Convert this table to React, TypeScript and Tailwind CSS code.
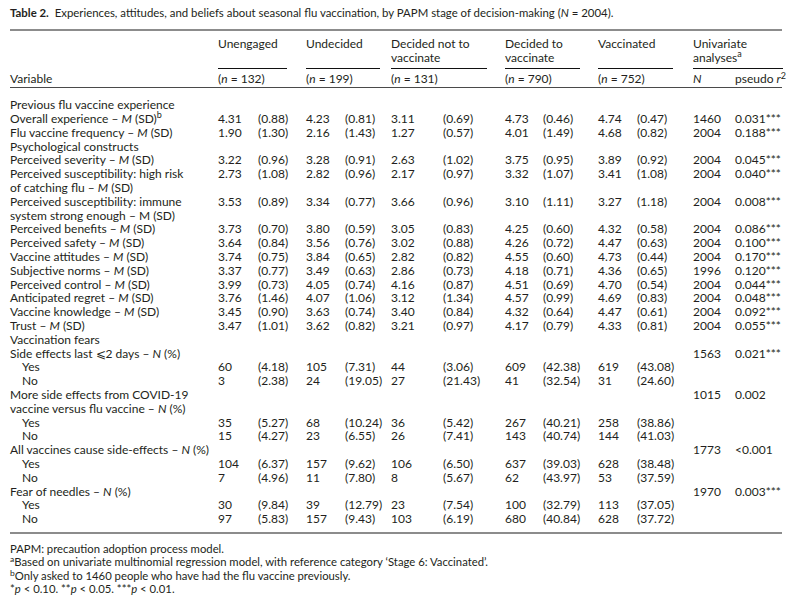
import type { ReactNode } from 'react'

const cols =
  'grid grid-cols-[208px_40px_48px_39px_46px_52px_62px_38px_55px_39px_56px_42px_48px]'

const mSD = (
  <>
    {' '}– <i>M</i> (SD)
  </>
)
const nPct = (
  <>
    {' '}– <i>N</i> (%)
  </>
)

interface Row {
  label: ReactNode[]
  indent?: boolean
  vals?: string[]
  n?: string
  r?: string
}

const rows: Row[] = [
  { label: ['Previous flu vaccine experience'] },
  {
    label: [
      <>
        Overall experience{mSD}
        <sup>b</sup>
      </>,
    ],
    vals: ['4.31', '(0.88)', '4.23', '(0.81)', '3.11', '(0.69)', '4.73', '(0.46)', '4.74', '(0.47)'],
    n: '1460',
    r: '0.031***',
  },
  {
    label: [<>Flu vaccine frequency{mSD}</>],
    vals: ['1.90', '(1.30)', '2.16', '(1.43)', '1.27', '(0.57)', '4.01', '(1.49)', '4.68', '(0.82)'],
    n: '2004',
    r: '0.188***',
  },
  { label: ['Psychological constructs'] },
  {
    label: [<>Perceived severity{mSD}</>],
    vals: ['3.22', '(0.96)', '3.28', '(0.91)', '2.63', '(1.02)', '3.75', '(0.95)', '3.89', '(0.92)'],
    n: '2004',
    r: '0.045***',
  },
  {
    label: ['Perceived susceptibility: high risk', <>of catching flu{mSD}</>],
    vals: ['2.73', '(1.08)', '2.82', '(0.96)', '2.17', '(0.97)', '3.32', '(1.07)', '3.41', '(1.08)'],
    n: '2004',
    r: '0.040***',
  },
  {
    label: ['Perceived susceptibility: immune', 'system strong enough – M (SD)'],
    vals: ['3.53', '(0.89)', '3.34', '(0.77)', '3.66', '(0.96)', '3.10', '(1.11)', '3.27', '(1.18)'],
    n: '2004',
    r: '0.008***',
  },
  {
    label: [<>Perceived benefits{mSD}</>],
    vals: ['3.73', '(0.70)', '3.80', '(0.59)', '3.05', '(0.83)', '4.25', '(0.60)', '4.32', '(0.58)'],
    n: '2004',
    r: '0.086***',
  },
  {
    label: [<>Perceived safety{mSD}</>],
    vals: ['3.64', '(0.84)', '3.56', '(0.76)', '3.02', '(0.88)', '4.26', '(0.72)', '4.47', '(0.63)'],
    n: '2004',
    r: '0.100***',
  },
  {
    label: [<>Vaccine attitudes{mSD}</>],
    vals: ['3.74', '(0.75)', '3.84', '(0.65)', '2.82', '(0.82)', '4.55', '(0.60)', '4.73', '(0.44)'],
    n: '2004',
    r: '0.170***',
  },
  {
    label: [<>Subjective norms{mSD}</>],
    vals: ['3.37', '(0.77)', '3.49', '(0.63)', '2.86', '(0.73)', '4.18', '(0.71)', '4.36', '(0.65)'],
    n: '1996',
    r: '0.120***',
  },
  {
    label: [<>Perceived control{mSD}</>],
    vals: ['3.99', '(0.73)', '4.05', '(0.74)', '4.16', '(0.87)', '4.51', '(0.69)', '4.70', '(0.54)'],
    n: '2004',
    r: '0.044***',
  },
  {
    label: [<>Anticipated regret{mSD}</>],
    vals: ['3.76', '(1.46)', '4.07', '(1.06)', '3.12', '(1.34)', '4.57', '(0.99)', '4.69', '(0.83)'],
    n: '2004',
    r: '0.048***',
  },
  {
    label: [<>Vaccine knowledge{mSD}</>],
    vals: ['3.45', '(0.90)', '3.63', '(0.74)', '3.40', '(0.84)', '4.32', '(0.64)', '4.47', '(0.61)'],
    n: '2004',
    r: '0.092***',
  },
  {
    label: [<>Trust{mSD}</>],
    vals: ['3.47', '(1.01)', '3.62', '(0.82)', '3.21', '(0.97)', '4.17', '(0.79)', '4.33', '(0.81)'],
    n: '2004',
    r: '0.055***',
  },
  { label: ['Vaccination fears'] },
  { label: [<>Side effects last ⩽2 days{nPct}</>], n: '1563', r: '0.021***' },
  {
    label: ['Yes'],
    indent: true,
    vals: ['60', '(4.18)', '105', '(7.31)', '44', '(3.06)', '609', '(42.38)', '619', '(43.08)'],
  },
  {
    label: ['No'],
    indent: true,
    vals: ['3', '(2.38)', '24', '(19.05)', '27', '(21.43)', '41', '(32.54)', '31', '(24.60)'],
  },
  {
    label: ['More side effects from COVID-19', <>vaccine versus flu vaccine{nPct}</>],
    n: '1015',
    r: '0.002',
  },
  {
    label: ['Yes'],
    indent: true,
    vals: ['35', '(5.27)', '68', '(10.24)', '36', '(5.42)', '267', '(40.21)', '258', '(38.86)'],
  },
  {
    label: ['No'],
    indent: true,
    vals: ['15', '(4.27)', '23', '(6.55)', '26', '(7.41)', '143', '(40.74)', '144', '(41.03)'],
  },
  { label: [<>All vaccines cause side-effects{nPct}</>], n: '1773', r: '<0.001' },
  {
    label: ['Yes'],
    indent: true,
    vals: ['104', '(6.37)', '157', '(9.62)', '106', '(6.50)', '637', '(39.03)', '628', '(38.48)'],
  },
  {
    label: ['No'],
    indent: true,
    vals: ['7', '(4.96)', '11', '(7.80)', '8', '(5.67)', '62', '(43.97)', '53', '(37.59)'],
  },
  { label: [<>Fear of needles{nPct}</>], n: '1970', r: '0.003***' },
  {
    label: ['Yes'],
    indent: true,
    vals: ['30', '(9.84)', '39', '(12.79)', '23', '(7.54)', '100', '(32.79)', '113', '(37.05)'],
  },
  {
    label: ['No'],
    indent: true,
    vals: ['97', '(5.83)', '157', '(9.43)', '103', '(6.19)', '680', '(40.84)', '628', '(37.72)'],
  },
]

const groups = [
  { name: ['Unengaged'], n: '132', rule: 'w-[69px]' },
  { name: ['Undecided'], n: '199', rule: 'w-[74px]' },
  { name: ['Decided not to', 'vaccinate'], n: '131', rule: 'w-[96px]' },
  { name: ['Decided to', 'vaccinate'], n: '790', rule: 'w-[75px]' },
  { name: ['Vaccinated'], n: '752', rule: 'w-[75px]' },
]

function TableRow({ row }: { row: Row }) {
  return (
    <div className={cols}>
      <div className={row.indent ? 'pl-[12px]' : ''}>
        {row.label.map((line, i) => (
          <div key={i} className="whitespace-nowrap">
            {line}
          </div>
        ))}
      </div>
      {row.vals
        ? row.vals.map((v, i) => <div key={i}>{v}</div>)
        : Array.from({ length: 10 }).map((_, i) => <div key={i} />)}
      <div>{row.n}</div>
      <div className="whitespace-nowrap">{row.r}</div>
    </div>
  )
}

export default function App() {
  return (
    <div className="w-[792px] h-[604px] bg-white px-[10px] pt-[6px] font-['Lato',sans-serif] text-[12px] leading-[13.8px] text-[#231f20]">
      <p className="whitespace-nowrap text-[11.4px]">
        <b>Table 2.</b>&nbsp;&nbsp;Experiences, attitudes, and beliefs about seasonal flu
        vaccination, by PAPM stage of decision-making (<i>N</i> = 2004).
      </p>

      <div className="mt-[9px] border-t-2 border-b border-t-[#8c8c8c] border-b-[#4a4a4a] pt-[6px] pb-[1px]">
        <div className={cols}>
          <div className="flex items-end">Variable</div>
          {groups.map((g) => (
            <div key={g.n} className="col-span-2 flex flex-col">
              <div className="h-[27.6px]">
                {g.name.map((l) => (
                  <div key={l}>{l}</div>
                ))}
              </div>
              <div className={`mt-[4px] h-px bg-[#111] ${g.rule}`} />
              <div className="mt-[3px]">
                (<i>n</i> = {g.n})
              </div>
            </div>
          ))}
          <div className="col-span-2 flex flex-col">
            <div className="h-[27.6px]">
              <div>Univariate</div>
              <div>
                analyses<sup>a</sup>
              </div>
            </div>
            <div className="mt-[4px] h-px bg-[#111] w-[90px]" />
            <div className="mt-[3px] grid grid-cols-[42px_48px]">
              <i>N</i>
              <div className="whitespace-nowrap">
                pseudo <i>r</i>
                <sup>2</sup>
              </div>
            </div>
          </div>
        </div>
      </div>

      <div className="pt-[10px] pb-[6px] border-b-2 border-[#8c8c8c]">
        {rows.map((row, i) => (
          <TableRow key={i} row={row} />
        ))}
      </div>

      <div className="pt-[8px] text-[11.3px] leading-[13.5px]">
        <p>PAPM: precaution adoption process model.</p>
        <p>
          <sup>a</sup>Based on univariate multinomial regression model, with reference category
          ‘Stage 6: Vaccinated’.
        </p>
        <p>
          <sup>b</sup>Only asked to 1460 people who have had the flu vaccine previously.
        </p>
        <p>
          *<i>p</i> &lt; 0.10. **<i>p</i> &lt; 0.05. ***<i>p</i> &lt; 0.01.
        </p>
      </div>
    </div>
  )
}
